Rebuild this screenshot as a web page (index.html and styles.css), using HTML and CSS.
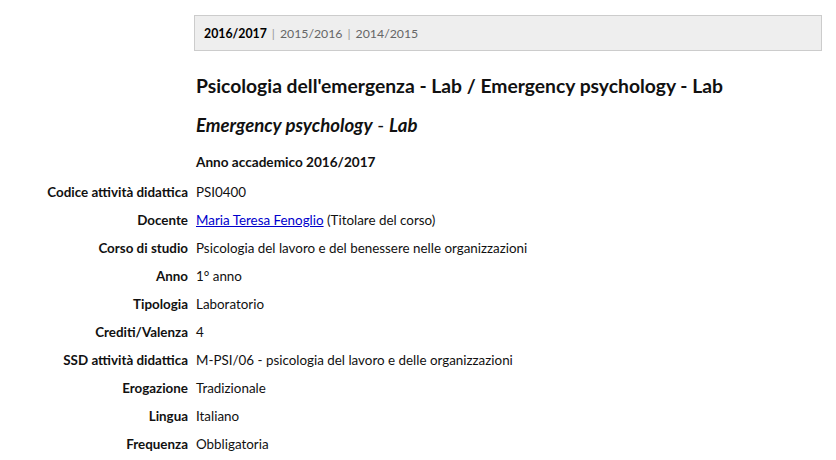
FILE: index.html
```html
<!DOCTYPE html>
<html lang="it">
<head>
    <meta charset="UTF-8">
    <meta name="viewport" content="width=device-width, initial-scale=1.0">
    <title>Psicologia dell'emergenza - Lab</title>
    <link rel="stylesheet" href="styles.css">
</head>
<body>
    <div class="page">
        <div class="years">
            <strong>2016/2017</strong>
            <span class="sep">|</span>
            <a href="#">2015/2016</a>
            <span class="sep">|</span>
            <a href="#">2014/2015</a>
        </div>

        <h1>Psicologia dell'emergenza - Lab / Emergency psychology - Lab</h1>
        <h2><em>Emergency psychology</em> - <em>Lab</em></h2>
        <h3>Anno accademico 2016/2017</h3>
    </div>

    <dl class="info">
        <dt>Codice attività didattica</dt>
        <dd>PSI0400</dd>

        <dt>Docente</dt>
        <dd><a class="person" href="#">Maria Teresa Fenoglio</a> (Titolare del corso)</dd>

        <dt>Corso di studio</dt>
        <dd>Psicologia del lavoro e del benessere nelle organizzazioni</dd>

        <dt>Anno</dt>
        <dd>1° anno</dd>

        <dt>Tipologia</dt>
        <dd>Laboratorio</dd>

        <dt>Crediti/Valenza</dt>
        <dd>4</dd>

        <dt>SSD attività didattica</dt>
        <dd>M-PSI/06 - psicologia del lavoro e delle organizzazioni</dd>

        <dt>Erogazione</dt>
        <dd>Tradizionale</dd>

        <dt>Lingua</dt>
        <dd>Italiano</dd>

        <dt>Frequenza</dt>
        <dd>Obbligatoria</dd>
    </dl>
</body>
</html>
```

FILE: styles.css
```css
body {
    margin: 0;
    font-family: Lato, "Liberation Sans", sans-serif;
    font-size: 13.4px;
    color: #111;
    background-color: white;
}
.page {
    margin-left: 194px;
    padding-top: 15px;
    width: 628px;
}
.years {
    background-color: #eee;
    border: 1px solid #ccc;
    height: 34px;
    display: flex;
    align-items: center;
    gap: 5px;
    padding-left: 9px;
    font-size: 12.3px;
}
.years strong {
    color: #000;
}
.years a {
    color: #666;
    text-decoration: none;
}
.years .sep {
    color: #999;
}
h1 {
    margin: 23px 0 0 2px;
    font-size: 19.3px;
    font-weight: bold;
    line-height: 24px;
}
h2 {
    margin: 15px 0 0 2px;
    font-size: 18.6px;
    font-weight: normal;
    line-height: 24px;
}
h2 em {
    font-style: italic;
    font-weight: bold;
}
h3 {
    margin: 13px 0 0 2px;
    font-size: 13.6px;
    font-weight: bold;
    line-height: 24px;
}
.info {
    display: grid;
    grid-template-columns: 188px auto;
    column-gap: 8px;
    row-gap: 8px;
    margin: 8px 0 0 0;
    line-height: 20px;
}
.info dt {
    font-weight: bold;
    text-align: right;
}
.info dd {
    margin: 0;
}
.person {
    color: #00c;
}
```
